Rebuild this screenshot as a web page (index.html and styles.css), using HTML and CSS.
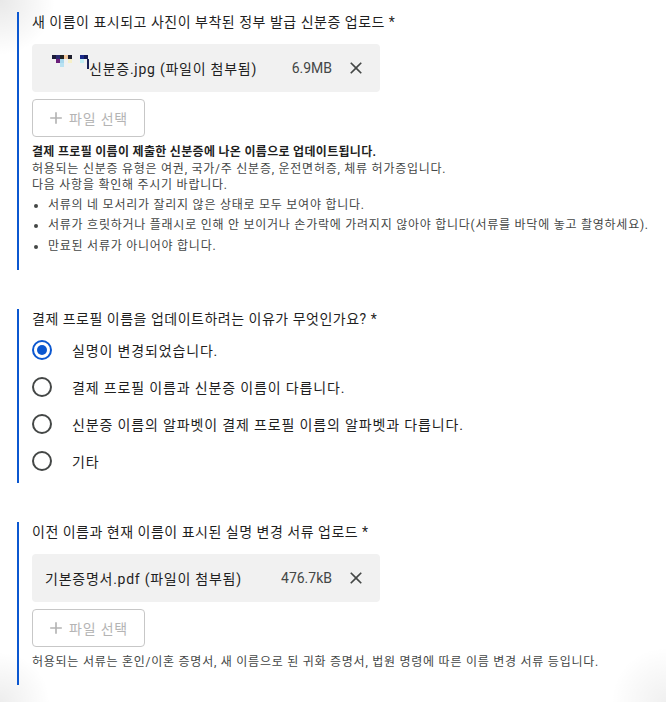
FILE: index.html
```html
<!DOCTYPE html>
<html lang="ko">
<head>
    <meta charset="UTF-8">
    <title>결제 프로필 이름 업데이트</title>
    <link rel="stylesheet" href="styles.css">
</head>
<body>
    <div class="form">
        <!-- ID upload -->
        <div class="field">
            <div class="field-title">새 이름이 표시되고 사진이 부착된 정부 발급 신분증 업로드 *</div>
            <div class="file-chip">
                <svg class="thumb" width="44" height="14" viewBox="0 0 44 14">
                    <rect x="7" y="0" width="4" height="4" fill="#1b1b3a"/>
                    <rect x="11" y="0" width="4" height="4" fill="#2a2a6e"/>
                    <rect x="15" y="0" width="4" height="4" fill="#222"/>
                    <rect x="19" y="0" width="4" height="4" fill="#f2c9a0"/>
                    <rect x="23" y="0" width="4" height="4" fill="#1e1e2e"/>
                    <rect x="11" y="4" width="4" height="4" fill="#6b1f7a"/>
                    <rect x="15" y="4" width="4" height="4" fill="#a8d8ee"/>
                    <rect x="23" y="4" width="4" height="4" fill="#f6f0c8"/>
                    <rect x="15" y="8" width="4" height="4" fill="#b9e2f2"/>
                    <rect x="35" y="0" width="4" height="4" fill="#1a2a8a"/>
                    <rect x="39" y="0" width="4" height="4" fill="#121a55"/>
                    <rect x="35" y="4" width="4" height="4" fill="#c4f0f4"/>
                    <rect x="42" y="4" width="2" height="10" fill="#1a2255"/>
                </svg>
                <span class="file-name">신분증.jpg (파일이 첨부됨)</span>
                <span class="file-size">6.9MB</span>
                <svg class="close" viewBox="0 0 24 24" width="20" height="20"><path d="M19 6.41L17.59 5 12 10.59 6.41 5 5 6.41 10.59 12 5 17.59 6.41 19 12 13.41 17.59 19 19 17.59 13.41 12z"/></svg>
            </div>
            <button type="button" class="pick-btn" disabled>
                <svg viewBox="0 0 24 24" width="20" height="20"><path d="M19 13h-6v6h-2v-6H5v-2h6V5h2v6h6v2z"/></svg>
                파일 선택
            </button>
            <div class="help">
                <p class="strong">결제 프로필 이름이 제출한 신분증에 나온 이름으로 업데이트됩니다.</p>
                <p>허용되는 신분증 유형은 여권, 국가/주 신분증, 운전면허증, 체류 허가증입니다.</p>
                <p>다음 사항을 확인해 주시기 바랍니다.</p>
                <ul>
                    <li>서류의 네 모서리가 잘리지 않은 상태로 모두 보여야 합니다.</li>
                    <li>서류가 흐릿하거나 플래시로 인해 안 보이거나 손가락에 가려지지 않아야 합니다(서류를 바닥에 놓고 촬영하세요).</li>
                    <li>만료된 서류가 아니어야 합니다.</li>
                </ul>
            </div>
        </div>

        <!-- reason -->
        <div class="field">
            <div class="field-title tight">결제 프로필 이름을 업데이트하려는 이유가 무엇인가요? *</div>
            <div class="radios">
                <label class="radio-row"><span class="radio checked"></span>실명이 변경되었습니다.</label>
                <label class="radio-row"><span class="radio"></span>결제 프로필 이름과 신분증 이름이 다릅니다.</label>
                <label class="radio-row"><span class="radio"></span>신분증 이름의 알파벳이 결제 프로필 이름의 알파벳과 다릅니다.</label>
                <label class="radio-row"><span class="radio"></span>기타</label>
            </div>
        </div>

        <!-- name change doc -->
        <div class="field">
            <div class="field-title">이전 이름과 현재 이름이 표시된 실명 변경 서류 업로드 *</div>
            <div class="file-chip">
                <span class="file-name">기본증명서.pdf (파일이 첨부됨)</span>
                <span class="file-size">476.7kB</span>
                <svg class="close" viewBox="0 0 24 24" width="20" height="20"><path d="M19 6.41L17.59 5 12 10.59 6.41 5 5 6.41 10.59 12 5 17.59 6.41 19 12 13.41 17.59 19 19 17.59 13.41 12z"/></svg>
            </div>
            <button type="button" class="pick-btn" disabled>
                <svg viewBox="0 0 24 24" width="20" height="20"><path d="M19 13h-6v6h-2v-6H5v-2h6V5h2v6h6v2z"/></svg>
                파일 선택
            </button>
            <div class="help">
                <p>허용되는 서류는 혼인/이혼 증명서, 새 이름으로 된 귀화 증명서, 법원 명령에 따른 이름 변경 서류 등입니다.</p>
            </div>
        </div>
    </div>
</body>
</html>
```

FILE: styles.css
```css
html {
    background: #ffffff;
}
body {
    margin: 0;
    min-height: 702px;
    font-family: Roboto, "Noto Sans CJK KR", sans-serif;
    color: #1f1f1f;
    background:
        radial-gradient(circle at 0 0, rgba(0, 0, 0, 0.09), rgba(0, 0, 0, 0) 55px),
        radial-gradient(circle at 0 100%, rgba(0, 0, 0, 0.07), rgba(0, 0, 0, 0) 50px),
        radial-gradient(circle at 100% 100%, rgba(0, 0, 0, 0.06), rgba(0, 0, 0, 0) 55px),
        #ffffff;
}
.form {
    padding: 12px 0 0 17px;
    display: flex;
    flex-direction: column;
    gap: 39px;
}
.field {
    border-left: 2px solid #0b57d0;
    padding-left: 13px;
}
.field-title {
    font-size: 14px;
    line-height: 20px;
    letter-spacing: 0.5px;
    margin-bottom: 12px;
}
.field-title.tight {
    margin-bottom: 2px;
}
.file-chip {
    display: flex;
    align-items: center;
    width: 348px;
    height: 48px;
    box-sizing: border-box;
    padding: 0 14px 0 13px;
    background: #f1f1f1;
    border-radius: 4px;
    font-size: 14px;
}
.thumb {
    align-self: flex-start;
    margin-top: 11px;
}
.file-name {
    flex: 1;
    letter-spacing: 0.75px;
}
.file-size {
    color: #444746;
}
.close {
    fill: #444746;
    margin-left: 14px;
}
.pick-btn {
    display: flex;
    align-items: center;
    gap: 3px;
    margin-top: 7px;
    width: 113px;
    height: 38px;
    padding: 0 0 0 13px;
    background: #ffffff;
    border: 1px solid #c7c7c7;
    border-radius: 4px;
    font-family: Roboto, "Noto Sans CJK KR", sans-serif;
    font-size: 14px;
    letter-spacing: 0.8px;
    color: #b4b4b4;
}
.pick-btn svg {
    fill: #b4b4b4;
}
.help {
    margin-top: 7px;
    padding-bottom: 14px;
    font-size: 12px;
    line-height: 16.5px;
    letter-spacing: 0.75px;
    color: #444746;
}
.help p {
    margin: 0;
}
.help .strong {
    font-weight: bold;
    letter-spacing: 0.3px;
    color: #1f1f1f;
}
.help ul {
    margin: 1px 0 0;
    padding-left: 16px;
}
.help li {
    line-height: 20.5px;
}
.radios {
    padding-bottom: 4px;
}
.radio-row {
    display: flex;
    align-items: center;
    height: 37px;
    font-size: 14px;
    letter-spacing: 0.85px;
}
.radio {
    width: 20px;
    height: 20px;
    box-sizing: border-box;
    border: 2px solid #444746;
    border-radius: 50%;
    margin-right: 20px;
    position: relative;
}
.radio.checked {
    border-color: #0b57d0;
}
.radio.checked::after {
    content: "";
    position: absolute;
    left: 3px;
    top: 3px;
    width: 10px;
    height: 10px;
    border-radius: 50%;
    background: #0b57d0;
}
```
